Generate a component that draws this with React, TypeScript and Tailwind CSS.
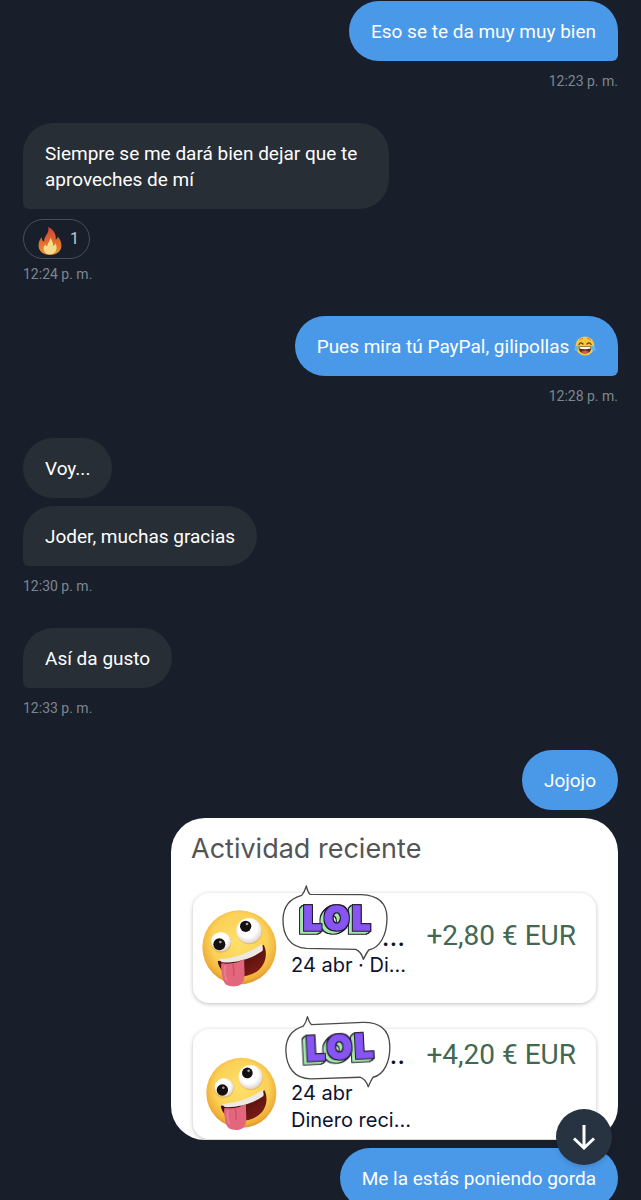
import React from 'react';

type Side = 'in' | 'out';

interface BubbleProps {
    side: Side;
    tail?: boolean;
    children: React.ReactNode;
}

function Bubble({ side, tail = false, children }: BubbleProps) {
    const color = side === 'out' ? 'bg-[#4a99e9]' : 'bg-[#272e35]';
    const corner = side === 'out' ? 'rounded-br-md' : 'rounded-bl-md';

    return (
        <div className={`max-w-[366px] rounded-[30px] px-[22px] pt-[18px] pb-4 text-[19px] leading-[26px] text-white ${color} ${tail ? corner : ''}`}>
            {children}
        </div>
    );
}

function Group({ side, children }: { side: Side; children: React.ReactNode }) {
    return (
        <section className={`flex flex-col gap-2 ${side === 'out' ? 'items-end' : 'items-start'}`}>
            {children}
        </section>
    );
}

function Time({ children }: { children: React.ReactNode }) {
    return <time className="mt-0.5 text-sm leading-5 text-[#7c8690]">{children}</time>;
}

function Flame() {
    return (
        <svg viewBox="0 0 36 44" className="mt-1 h-7 w-6" role="img" aria-label="🔥">
            <defs>
                <linearGradient id="flame" x1="0" y1="0" x2="0" y2="1">
                    <stop offset="0" stopColor="#d2433c" />
                    <stop offset="0.5" stopColor="#e06a2c" />
                    <stop offset="1" stopColor="#e8933c" />
                </linearGradient>
            </defs>
            <path d="M15 0C24 4 28 11 27 20C29 19 30 17 30 15C34 19 36 24 36 29C36 38 28 44 18 44C8 44 0 38 0 29C0 23 2 19 5 16C5 20 6 22 9 23C8 14 18 10 15 0Z" fill="url(#flame)" />
            <path d="M18 17C22 21 23 26 23 30C25 29 26 27 26 25C28 28 29 32 28 35C27 40 23 43 18 43C12 43 8 39 8 34C8 31 9 29 11 27C11 29 12 30 14 30C14 25 19 22 18 17Z" fill="#f4dc8b" />
        </svg>
    );
}

function TearsOfJoy() {
    return (
        <svg viewBox="0 0 44 40" className="inline-block h-5 w-[22px] align-[-3px]" role="img" aria-label="😂">
            <circle cx="22" cy="20" r="19" fill="#f8c843" />
            <path d="M10 17Q13 11 18 16M26 16Q31 11 34 17" fill="none" stroke="#5b3a1c" strokeWidth="2.5" strokeLinecap="round" />
            <path d="M11 8Q13 5 17 5M27 5Q31 5 33 8" fill="none" stroke="#a87423" strokeWidth="1.5" strokeLinecap="round" />
            <path d="M9 21H35C35 30 30 35 22 35S9 30 9 21Z" fill="#5b2c18" />
            <path d="M11 22H33V25Q22 28 11 25Z" fill="#fff" />
            <path d="M14 32Q22 26 30 32Q22 37 14 32Z" fill="#e2574c" />
            <path d="M9 18C3 20 0 24 1 28C2 31 7 31 8 27ZM35 18C41 20 44 24 43 28C42 31 37 31 36 27Z" fill="#5fb7ee" />
        </svg>
    );
}

function ZanyFace({ id, className }: { id: string; className: string }) {
    const skin = `${id}-skin`;
    const eye = `${id}-eye`;
    const mouth = `${id}-mouth`;

    return (
        <svg viewBox="62 85 231 240" className={className} role="img" aria-label="🤪">
            <defs>
                <radialGradient id={skin} cx="0.5" cy="0.42" r="0.58">
                    <stop offset="0" stopColor="#fde06a" />
                    <stop offset="0.65" stopColor="#fbd157" />
                    <stop offset="0.9" stopColor="#f0ae38" />
                    <stop offset="1" stopColor="#dc9430" />
                </radialGradient>
                <radialGradient id={eye} cx="0.45" cy="0.4" r="0.6">
                    <stop offset="0.6" stopColor="#ffffff" />
                    <stop offset="1" stopColor="#dcd6d2" />
                </radialGradient>
                <linearGradient id={mouth} x1="0" y1="0" x2="1" y2="1">
                    <stop offset="0" stopColor="#2c0505" />
                    <stop offset="1" stopColor="#8a1f18" />
                </linearGradient>
            </defs>
            <circle cx="177" cy="203" r="111" fill={`url(#${skin})`} />
            <ellipse cx="122" cy="189" rx="31" ry="30" fill="#d99a35" opacity="0.5" />
            <ellipse cx="122" cy="186" rx="30" ry="29" fill={`url(#${eye})`} />
            <circle cx="117" cy="194" r="18" fill="#140f10" />
            <circle cx="120" cy="187" r="4" fill="#a9a4a3" />
            <circle cx="207" cy="156" r="38" fill="#d99a35" opacity="0.5" />
            <circle cx="206" cy="153" r="38" fill={`url(#${eye})`} />
            <circle cx="196" cy="140" r="17" fill="#140f10" />
            <circle cx="200" cy="133" r="4" fill="#a9a4a3" />
            <path d="M112 244C166 242 216 222 250 195C262 218 258 250 236 270C212 292 170 296 144 286C124 276 114 260 112 244Z" fill={`url(#${mouth})`} />
            <path d="M116 238C166 236 212 216 244 194Q250 206 246 214C212 238 168 250 124 248Z" fill="#ece8e6" />
            <path d="M124 250C146 255 172 250 192 238C190 262 196 284 190 302C184 318 170 322 152 320C134 318 128 306 126 290C124 274 120 262 124 250Z" fill="#e2677c" />
            <path d="M158 254C160 268 162 276 160 288" fill="none" stroke="#c9506a" strokeWidth="4" strokeLinecap="round" />
            <path d="M134 260C132 276 134 290 139 300" fill="none" stroke="#ea7c8f" strokeWidth="6" strokeLinecap="round" />
        </svg>
    );
}

const DEPTH_STEPS = [1, 3, 5, 7, 9, 11];

function LolSticker({ id, className }: { id: string; className: string }) {
    return (
        <svg viewBox="304 12 327 231" className={className}>
            <defs>
                {/* dark rim round the letters, over a green block side cast down and to the left */}
                <filter id={id} x="-20%" y="-20%" width="140%" height="150%" colorInterpolationFilters="sRGB">
                    {DEPTH_STEPS.map((d) => (
                        <feOffset key={d} in="SourceAlpha" dx={-d} dy={d * 0.8} result={`step${d}`} />
                    ))}
                    <feMerge result="block">
                        {DEPTH_STEPS.map((d) => <feMergeNode key={d} in={`step${d}`} />)}
                    </feMerge>
                    <feFlood floodColor="#a5e8a9" />
                    <feComposite in2="block" operator="in" result="green" />
                    <feMorphology in="block" operator="dilate" radius="3" result="blockEdge" />
                    <feFlood floodColor="#1f1b2e" />
                    <feComposite in2="blockEdge" operator="in" result="blockRim" />
                    <feMorphology in="SourceAlpha" operator="dilate" radius="3" result="faceEdge" />
                    <feFlood floodColor="#1f1b2e" />
                    <feComposite in2="faceEdge" operator="in" result="faceRim" />
                    <feMerge>
                        <feMergeNode in="blockRim" />
                        <feMergeNode in="green" />
                        <feMergeNode in="faceRim" />
                        <feMergeNode in="SourceGraphic" />
                    </feMerge>
                </filter>
            </defs>
            <path
                d="M310 118C311 80 332 55 366 46Q375 36 380 18Q384 36 391 43L545 44C600 46 622 75 622 115C622 165 600 205 567 210Q560 220 551 238Q545 215 528 208L380 205C330 202 309 165 310 118Z"
                fill="#fff"
                stroke="#4a4a4a"
                strokeWidth="4"
                strokeLinejoin="round"
            />
            <text
                x="371 433 517"
                y="150 150 150"
                fill="#8755f2"
                stroke="#8755f2"
                strokeWidth="4"
                fontFamily="Inter, sans-serif"
                fontWeight="900"
                fontSize="98"
                filter={`url(#${id})`}
            >
                LOL
            </text>
        </svg>
    );
}

function PaymentCard() {
    return (
        <figure className="h-[322px] w-[447px] max-w-full overflow-hidden rounded-[34px] bg-white px-[22px]">
            <h2 className="-ml-0.5 pt-4 pb-[29px] text-[27px] leading-[30px] text-[#545456]">Actividad reciente</h2>

            <div className="flex flex-col gap-[26px] text-[20px] leading-[27px] text-[#0b1230]">
                <div className="relative flex h-[110px] rounded-2xl bg-white pr-5 pl-2 shadow-[0_1px_4px_rgba(0,0,0,0.25)]">
                    <ZanyFace id="zany-a" className="mt-[15px] h-20 w-[77px] flex-none" />
                    <div className="ml-[13px] pt-[29px] whitespace-nowrap">
                        <p className="w-[114px] text-right text-[27px] leading-[30px]">…</p>
                        <p>24 abr · Di…</p>
                    </div>
                    <p className="ml-auto pt-7 font-[Roboto,sans-serif] text-[28px] leading-[30px] whitespace-nowrap text-[#426851]">+2,80 € EUR</p>
                    <LolSticker id="lol-a" className="absolute -top-[9px] left-[88px] h-[77px] w-[109px]" />
                </div>

                <div className="relative flex h-[110px] rounded-2xl bg-white pr-5 pl-3 shadow-[0_1px_4px_rgba(0,0,0,0.25)]">
                    <ZanyFace id="zany-b" className="mt-[26px] h-[77px] w-[73px] flex-none" />
                    <div className="ml-[13px] pt-[11px] whitespace-nowrap">
                        <p className="mb-2.5 w-[114px] text-right text-[27px] leading-[30px]">…</p>
                        <p>24 abr</p>
                        <p>Dinero reci…</p>
                    </div>
                    <p className="ml-auto pt-[11px] font-[Roboto,sans-serif] text-[28px] leading-[30px] whitespace-nowrap text-[#426851]">+4,20 € EUR</p>
                    <LolSticker id="lol-b" className="absolute -top-4 left-[91px] h-[77px] w-[109px] -rotate-3" />
                </div>
            </div>
        </figure>
    );
}

export default function App() {
    return (
        <main className="relative h-screen overflow-hidden bg-[#181f2a] font-[Roboto,sans-serif]">
            <div className="flex h-full flex-col gap-8 overflow-y-auto px-[23px] pt-px [scrollbar-width:none]">
                <Group side="out">
                    <Bubble side="out" tail>Eso se te da muy muy bien</Bubble>
                    <Time>12:23 p. m.</Time>
                </Group>

                <Group side="in">
                    <Bubble side="in" tail>Siempre se me dará bien dejar que te aproveches de mí</Bubble>
                    <button className="mt-0.5 flex h-10 items-center gap-2 rounded-full border border-[#47505a] pr-2.5 pl-3.5 text-base text-[#c3c8cd]">
                        <Flame />
                        <span>1</span>
                    </button>
                    <time className="-mt-[3px] text-sm leading-5 text-[#7c8690]">12:24 p. m.</time>
                </Group>

                <Group side="out">
                    <Bubble side="out" tail>Pues mira tú PayPal, gilipollas <TearsOfJoy /></Bubble>
                    <Time>12:28 p. m.</Time>
                </Group>

                <Group side="in">
                    <Bubble side="in">Voy...</Bubble>
                    <Bubble side="in" tail>Joder, muchas gracias</Bubble>
                    <Time>12:30 p. m.</Time>
                </Group>

                <Group side="in">
                    <Bubble side="in" tail>Así da gusto</Bubble>
                    <Time>12:33 p. m.</Time>
                </Group>

                <Group side="out">
                    <Bubble side="out">Jojojo</Bubble>
                    <div className="max-w-full font-[Inter,sans-serif]">
                        <PaymentCard />
                    </div>
                    <Bubble side="out">Me la estás poniendo gorda</Bubble>
                </Group>
            </div>

            <button
                aria-label="Ir al final"
                className="absolute right-[29px] bottom-[35px] flex size-14 items-center justify-center rounded-full bg-[#273340] text-white shadow-md"
            >
                <svg viewBox="0 0 32 32" className="size-8" fill="none" stroke="currentColor" strokeWidth="3">
                    <path d="M16 4V27M6 17.5L16 27L26 17.5" />
                </svg>
            </button>
        </main>
    );
}
